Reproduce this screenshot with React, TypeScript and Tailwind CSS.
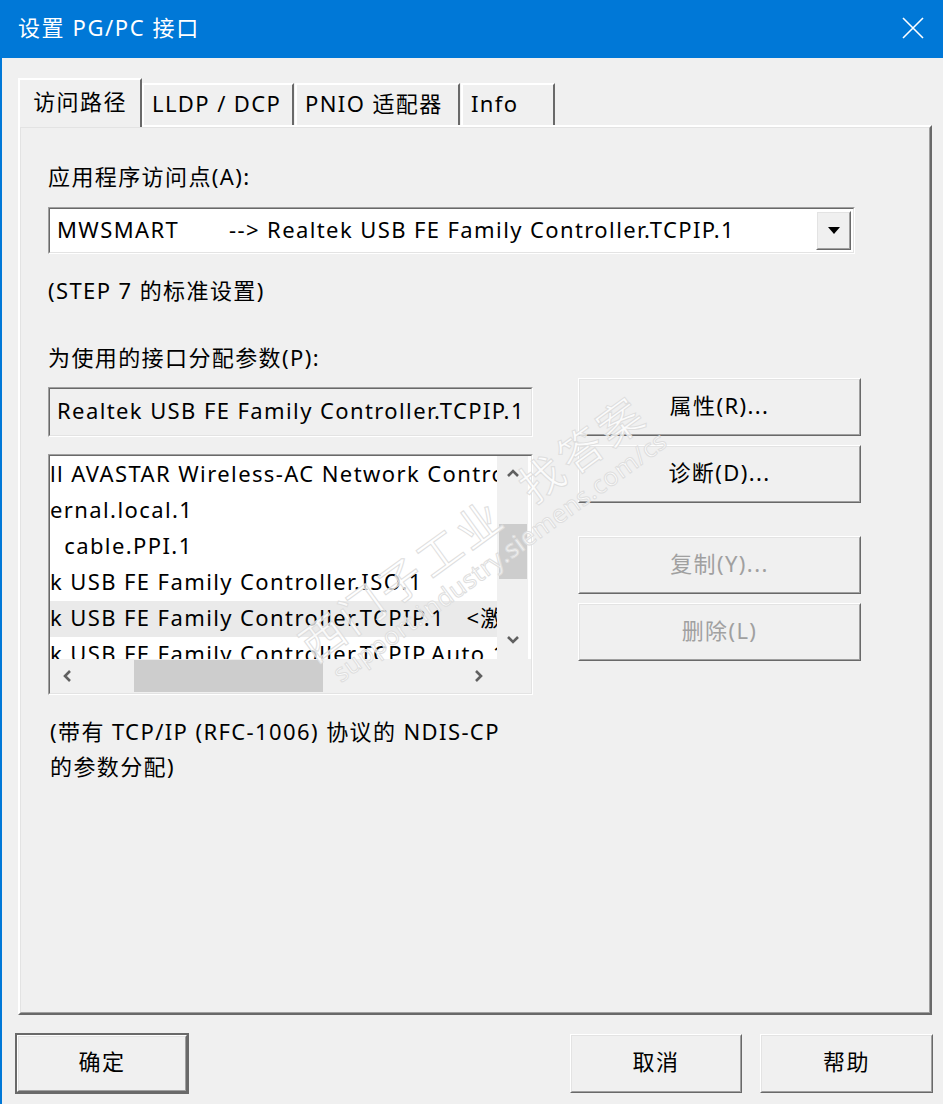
import React from 'react';

const font = "font-['Noto_Sans','Noto_Sans_CJK_SC',sans-serif]";

function RaisedButton({
  label,
  disabled,
  isDefault,
  className,
}: {
  label: string;
  disabled?: boolean;
  isDefault?: boolean;
  className?: string;
}) {
  const inner = (
    <div className="h-full border-t border-l border-white border-r border-b border-r-[#696969] border-b-[#696969]">
      <div className="h-full flex items-center justify-center pb-[4px] border border-t-[#e3e3e3] border-l-[#e3e3e3] border-r-[#a0a0a0] border-b-[#a0a0a0] bg-[#f0f0f0]">
        <span className={disabled ? 'text-[#a0a0a0]' : 'text-black'}>{label}</span>
      </div>
    </div>
  );
  if (isDefault) {
    return <div className={`border-2 border-[#696969] ${className ?? ''}`}>{inner}</div>;
  }
  return <div className={className}>{inner}</div>;
}

function Sunken({ children, className }: { children: React.ReactNode; className?: string }) {
  return (
    <div className={`border border-t-[#a0a0a0] border-l-[#a0a0a0] border-r-white border-b-white ${className ?? ''}`}>
      <div className="h-full border border-t-[#696969] border-l-[#696969] border-r-[#e3e3e3] border-b-[#e3e3e3]">
        {children}
      </div>
    </div>
  );
}

function Tab({ label, active, className }: { label: string; active?: boolean; className?: string }) {
  if (active) {
    return (
      <div className={`relative z-10 -mb-[2px] h-[49px] bg-[#f0f0f0] border-t-2 border-l-2 border-white border-r-2 border-r-[#696969] flex items-start pt-[5px] justify-center ${className ?? ''}`}>
        {label}
      </div>
    );
  }
  return (
    <div className={`h-[42px] bg-[#f0f0f0] border-t-2 border-l-2 border-white border-r-2 border-r-[#696969] flex items-center pb-[4px] px-[8px] ${className ?? ''}`}>
      {label}
    </div>
  );
}

const rows = [
  { text: 'll AVASTAR Wireless-AC Network Controller.TCPIP.1' },
  { text: 'ernal.local.1' },
  { text: '  cable.PPI.1' },
  { text: 'k USB FE Family Controller.ISO.1' },
  { text: 'k USB FE Family Controller.TCPIP.1   <激活>', selected: true },
  { text: 'k USB FE Family Controller.TCPIP.Auto.1' },
];

function Chevron({ dir }: { dir: 'up' | 'down' | 'left' | 'right' }) {
  const d = {
    up: 'M2 9 L7 4 L12 9',
    down: 'M2 5 L7 10 L12 5',
    left: 'M9 2 L4 7 L9 12',
    right: 'M5 2 L10 7 L5 12',
  }[dir];
  return (
    <svg width="14" height="14" viewBox="0 0 14 14">
      <path d={d} fill="none" stroke="#606060" strokeWidth="2.6" />
    </svg>
  );
}

export default function App() {
  return (
    <div className={`relative w-[943px] h-[1104px] bg-[#f0f0f0] flex flex-col overflow-hidden text-[22px] tracking-[1.4px] text-black ${font}`}>
      {/* title bar */}
      <div className="h-[58px] bg-[#0078d7] flex items-center justify-between pl-[18px] pr-[19px] pb-[2px] shrink-0">
        <span className="text-white text-[22px] tracking-[1.6px] -mt-[2px]">设置 PG/PC 接口</span>
        <svg width="22" height="22" viewBox="0 0 22 22">
          <path d="M1 1 L21 21 M21 1 L1 21" stroke="white" strokeWidth="1.6" />
        </svg>
      </div>

      <div className="flex-1 flex flex-col border-l-2 border-[#0078d7] pl-[16px] pr-[10px]">
        {/* tabs */}
        <div className="flex items-end mt-[20px] h-[47px]">
          <Tab label="访问路径" active className="w-[124px]" />
          <Tab label="LLDP / DCP" className="w-[152px]" />
          <Tab label="PNIO 适配器" className="w-[165px] ml-[1px]" />
          <Tab label="Info" className="w-[94px] ml-[1px]" />
        </div>

        {/* panel */}
        <div className="w-[914px] h-[890px] border-t-2 border-l-2 border-white border-r-2 border-b-2 border-r-[#696969] border-b-[#696969]">
          <div className="h-full border border-t-[#e3e3e3] border-l-[#e3e3e3] border-r-[#a0a0a0] border-b-[#a0a0a0] pl-[27px] pt-[34px]">
            <div className="leading-[28px]">应用程序访问点(A):</div>

            <Sunken className="mt-[17px] w-[807px] h-[47px] bg-white">
              <div className="h-full flex items-center bg-white">
                <span className="inline-block w-[179px] pl-[7px] pb-[3px] whitespace-pre">MWSMART</span>
                <span className="flex-1 pb-[3px] whitespace-pre">--&gt; Realtek USB FE Family Controller.TCPIP.1</span>
                <div className="w-[35px] h-[39px] mr-[2px] border border-t-white border-l-white border-r-[#696969] border-b-[#696969]">
                  <div className="h-full flex items-center justify-center border border-t-[#e3e3e3] border-l-[#e3e3e3] border-r-[#a0a0a0] border-b-[#a0a0a0] bg-[#f0f0f0]">
                    <svg width="12" height="7" viewBox="0 0 12 7">
                      <path d="M0 0 H12 L6 7 Z" fill="black" />
                    </svg>
                  </div>
                </div>
              </div>
            </Sunken>

            <div className="mt-[22px] leading-[28px]">(STEP 7 的标准设置)</div>

            <div className="mt-[39px] leading-[28px]">为使用的接口分配参数(P):</div>

            <div className="flex mt-[7px]">
              {/* left column */}
              <div className="w-[485px] pt-[9px]">
                <Sunken className="h-[50px] bg-[#f0f0f0]">
                  <div className="h-full flex items-center pl-[7px] pb-[4px] whitespace-nowrap overflow-hidden">
                    Realtek USB FE Family Controller.TCPIP.1
                  </div>
                </Sunken>

                <Sunken className="mt-[17px] h-[241px] bg-white">
                  <div className="h-full flex flex-col">
                    <div className="flex h-[203px]">
                      <div className="w-[447px] overflow-hidden pt-[1px]">
                        {rows.map((r) => (
                          <div
                            key={r.text}
                            className={`h-[36px] leading-[32px] whitespace-pre ${r.selected ? 'bg-[#eaeaea]' : ''}`}
                          >
                            {r.text}
                          </div>
                        ))}
                      </div>
                      <div className="w-[31px] bg-[#f0f0f0] flex flex-col items-center">
                        <div className="h-[36px] flex items-center justify-center">
                          <Chevron dir="up" />
                        </div>
                        <div className="h-[32px]" />
                        <div className="w-[28px] h-[55px] bg-[#cdcdcd]" />
                        <div className="flex-1" />
                        <div className="h-[40px] flex items-center justify-center">
                          <Chevron dir="down" />
                        </div>
                      </div>
                    </div>
                    <div className="flex-1 flex items-stretch bg-[#f0f0f0]">
                      <div className="w-[31px] flex items-center justify-center ml-[2px]">
                        <Chevron dir="left" />
                      </div>
                      <div className="w-[51px]" />
                      <div className="w-[189px] bg-[#cdcdcd] my-[1px]" />
                      <div className="flex-1 flex items-center justify-end pr-[46px]">
                        <Chevron dir="right" />
                      </div>
                    </div>
                  </div>
                </Sunken>

                <div className="mt-[19px] leading-[35px] pl-[2px]">
                  <div>(带有 TCP/IP (RFC-1006) 协议的 NDIS-CP</div>
                  <div>的参数分配)</div>
                </div>
              </div>

              {/* right column */}
              <div className="ml-[45px] w-[283px] flex flex-col">
                <RaisedButton label="属性(R)..." className="h-[58px]" />
                <RaisedButton label="诊断(D)..." className="h-[58px] mt-[9px]" />
                <RaisedButton label="复制(Y)..." disabled className="h-[58px] mt-[33px]" />
                <RaisedButton label="删除(L)" disabled className="h-[58px] mt-[9px]" />
              </div>
            </div>
          </div>
        </div>

        {/* bottom buttons */}
        <div className="flex mt-[18px]">
          <RaisedButton label="确定" isDefault className="w-[174px] h-[61px] -ml-[3px]" />
          <div className="flex-1" />
          <RaisedButton label="取消" className="w-[172px] h-[59px] mt-[1px]" />
          <RaisedButton label="帮助" className="w-[173px] h-[59px] mt-[1px] ml-[18px]" />
        </div>
      </div>

      {/* watermark */}
      <div className="pointer-events-none absolute left-[290px] top-[630px] -rotate-[36deg] origin-top-left select-none">
        <div className="text-[44px] leading-[50px] text-white/75 [-webkit-text-stroke:1px_#dedede] tracking-[4px] whitespace-nowrap">
          西门子工业&nbsp;&nbsp;找答案
        </div>
        <div className="text-[25px] leading-[27px] tracking-[0.5px] text-white/75 [-webkit-text-stroke:1px_#dedede] whitespace-nowrap pl-[10px]">
          support.industry.siemens.com/cs
        </div>
      </div>
    </div>
  );
}
